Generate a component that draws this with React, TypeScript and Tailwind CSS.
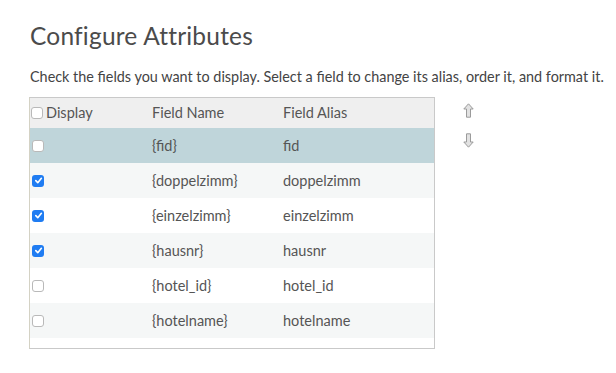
import React from "react";

type Row = { name: string; alias: string; checked: boolean; bg: string };

const rows: Row[] = [
  { name: "{fid}", alias: "fid", checked: false, bg: "bg-[#bfd5da]" },
  { name: "{doppelzimm}", alias: "doppelzimm", checked: true, bg: "bg-[#f5f7f7]" },
  { name: "{einzelzimm}", alias: "einzelzimm", checked: true, bg: "bg-white" },
  { name: "{hausnr}", alias: "hausnr", checked: true, bg: "bg-[#f5f7f7]" },
  { name: "{hotel_id}", alias: "hotel_id", checked: false, bg: "bg-white" },
  { name: "{hotelname}", alias: "hotelname", checked: false, bg: "bg-[#f5f7f7]" },
];

function Box({ checked }: { checked: boolean }) {
  if (checked) {
    return (
      <span className="flex h-[12px] w-[12px] items-center justify-center rounded-[3px] bg-[#1f7cf2]">
        <svg width="9" height="9" viewBox="0 0 10 10">
          <path d="M2 5.2 L4.2 7.4 L8.2 2.6" fill="none" stroke="white" strokeWidth="1.8" strokeLinecap="round" strokeLinejoin="round" />
        </svg>
      </span>
    );
  }
  return <span className="block h-[12px] w-[12px] rounded-[3px] border border-[#b9b9b9] bg-white" />;
}

function Arrow({ down }: { down?: boolean }) {
  return (
    <svg width="11" height="15" viewBox="0 0 11 15" className={down ? "rotate-180" : ""}>
      <path d="M5.5 0.8 L10.2 6 L7.5 6 L7.5 14.2 L3.5 14.2 L3.5 6 L0.8 6 Z" fill="#e2e2e2" stroke="#9b9b9b" strokeWidth="1" strokeLinejoin="round" />
    </svg>
  );
}

export default function App() {
  return (
    <div className="h-[373px] w-[616px] bg-white pl-[30px] text-[#4a4a4a]" style={{ fontFamily: "Lato, 'Noto Sans', sans-serif" }}>
      <h1 className="pt-[20px] text-[24.5px] leading-[32px] tracking-[0.2px] text-[#4b4b4b]">Configure Attributes</h1>
      <p className="mt-[16px] text-[14.4px] leading-[18px] text-[#444]">
        Check the fields you want to display. Select a field to change its alias, order it, and format it.
      </p>
      <div className="mt-[11px] flex">
        <div className="ml-[-1px] h-[252px] w-[406px] border border-[#c9c9c9] border-l-[#d4d2c4] bg-white">
          <div className="flex h-[30px] items-center bg-[#efefef] text-[14.5px] text-[#555]">
            <div className="flex w-[122px] items-center gap-[3px] pl-[1px]">
              <Box checked={false} />
              <span>Display</span>
            </div>
            <div className="w-[131px]">Field Name</div>
            <div>Field Alias</div>
          </div>
          {rows.map((r) => (
            <div key={r.name} className={`flex h-[35px] items-center text-[14.5px] text-[#555] ${r.bg}`}>
              <div className="w-[122px] pl-[2px]">
                <Box checked={r.checked} />
              </div>
              <div className="w-[131px]">{r.name}</div>
              <div>{r.alias}</div>
            </div>
          ))}
        </div>
        <div className="ml-[28px] flex flex-col gap-[15px] pt-[6px]">
          <Arrow />
          <Arrow down />
        </div>
      </div>
    </div>
  );
}
